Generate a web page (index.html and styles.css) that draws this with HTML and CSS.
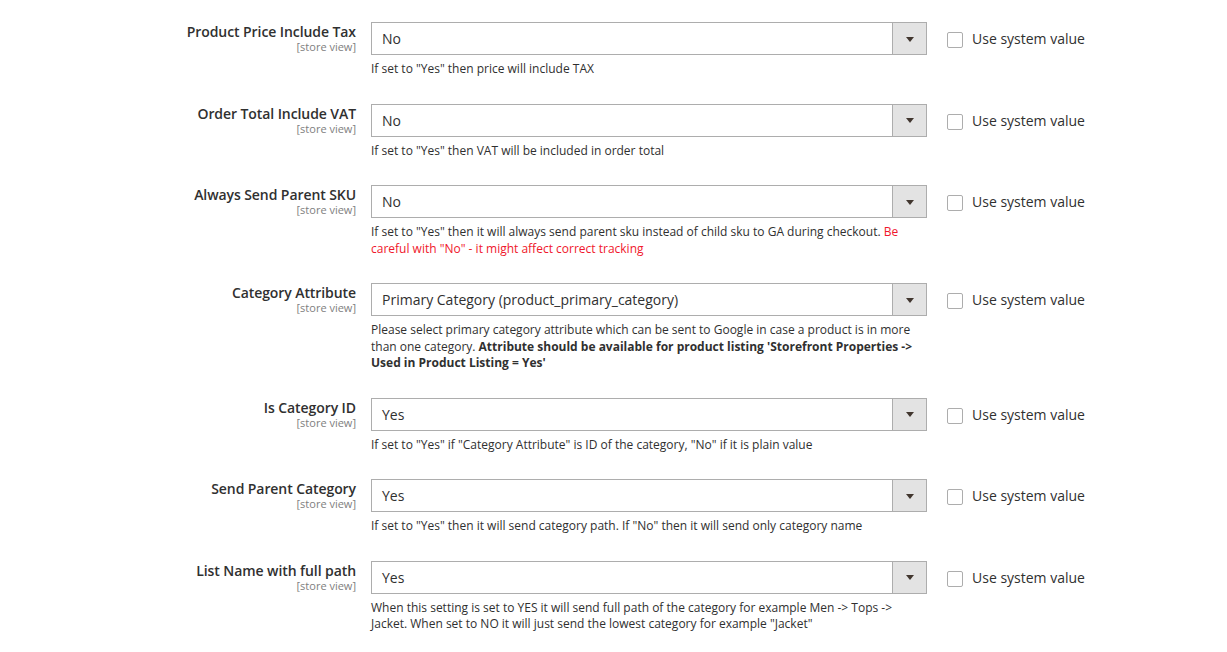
FILE: index.html
```html
<!DOCTYPE html>
<html>
<head>
<meta charset="utf-8">
<link rel="stylesheet" href="styles.css">
</head>
<body>
<div class="config">
  <div class="row">
    <div class="label"><span class="title">Product Price Include Tax</span><span class="scope">[store view]</span></div>
    <div class="value">
      <div class="select"><span class="sel-text">No</span><span class="arrow"></span></div>
      <p class="note">If set to "Yes" then price will include TAX</p>
    </div>
    <div class="use"><span class="cb"></span><span class="use-text">Use system value</span></div>
  </div>
  <div class="row">
    <div class="label"><span class="title">Order Total Include VAT</span><span class="scope">[store view]</span></div>
    <div class="value">
      <div class="select"><span class="sel-text">No</span><span class="arrow"></span></div>
      <p class="note">If set to "Yes" then VAT will be included in order total</p>
    </div>
    <div class="use"><span class="cb"></span><span class="use-text">Use system value</span></div>
  </div>
  <div class="row">
    <div class="label"><span class="title">Always Send Parent SKU</span><span class="scope">[store view]</span></div>
    <div class="value">
      <div class="select"><span class="sel-text">No</span><span class="arrow"></span></div>
      <p class="note">If set to "Yes" then it will always send parent sku instead of child sku to GA during checkout. <span class="warn">Be careful with "No" - it might affect correct tracking</span></p>
    </div>
    <div class="use"><span class="cb"></span><span class="use-text">Use system value</span></div>
  </div>
  <div class="row">
    <div class="label"><span class="title">Category Attribute</span><span class="scope">[store view]</span></div>
    <div class="value">
      <div class="select"><span class="sel-text">Primary Category (product_primary_category)</span><span class="arrow"></span></div>
      <p class="note">Please select primary category attribute which can be sent to Google in case a product is in more than one category. <strong>Attribute should be available for product listing 'Storefront Properties -&gt; Used in Product Listing = Yes'</strong></p>
    </div>
    <div class="use"><span class="cb"></span><span class="use-text">Use system value</span></div>
  </div>
  <div class="row">
    <div class="label"><span class="title">Is Category ID</span><span class="scope">[store view]</span></div>
    <div class="value">
      <div class="select"><span class="sel-text">Yes</span><span class="arrow"></span></div>
      <p class="note">If set to "Yes" if "Category Attribute" is ID of the category, "No" if it is plain value</p>
    </div>
    <div class="use"><span class="cb"></span><span class="use-text">Use system value</span></div>
  </div>
  <div class="row">
    <div class="label"><span class="title">Send Parent Category</span><span class="scope">[store view]</span></div>
    <div class="value">
      <div class="select"><span class="sel-text">Yes</span><span class="arrow"></span></div>
      <p class="note">If set to "Yes" then it will send category path. If "No" then it will send only category name</p>
    </div>
    <div class="use"><span class="cb"></span><span class="use-text">Use system value</span></div>
  </div>
  <div class="row">
    <div class="label"><span class="title">List Name with full path</span><span class="scope">[store view]</span></div>
    <div class="value">
      <div class="select"><span class="sel-text">Yes</span><span class="arrow"></span></div>
      <p class="note">When this setting is set to YES it will send full path of the category for example Men -&gt; Tops -&gt; Jacket. When set to NO it will just send the lowest category for example "Jacket"</p>
    </div>
    <div class="use"><span class="cb"></span><span class="use-text">Use system value</span></div>
  </div>
</div>
</body>
</html>
```
FILE: styles.css
```css
html, body {
  margin: 0;
  padding: 0;
  background: #ffffff;
}
body {
  font-family: "Open Sans", "Noto Sans", sans-serif;
  color: #303030;
}
.config {
  padding-top: 22px;
}
.row {
  display: flex;
  align-items: flex-start;
  margin-bottom: 26px;
}
.label {
  width: 356px;
  flex: none;
  text-align: right;
  padding-top: 2px;
  display: flex;
  flex-direction: column;
  align-items: flex-end;
}
.title {
  font-size: 14px;
  font-weight: 600;
  line-height: 16px;
  letter-spacing: -0.08px;
  color: #303030;
}
.scope {
  font-size: 11px;
  line-height: 13px;
  color: #808080;
}
.value {
  margin-left: 15px;
  width: 556px;
  flex: none;
}
.select {
  box-sizing: border-box;
  height: 33px;
  border: 1px solid #adadad;
  background: #ffffff;
  display: flex;
  align-items: stretch;
}
.sel-text {
  flex: 1;
  padding-left: 10px;
  font-size: 14px;
  line-height: 31px;
  color: #303030;
}
.arrow {
  width: 33px;
  flex: none;
  background: #e3e3e3;
  border-left: 1px solid #adadad;
  position: relative;
}
.arrow::after {
  content: "";
  position: absolute;
  left: 50%;
  top: 50%;
  margin-left: -4px;
  margin-top: -2px;
  border-left: 4.5px solid transparent;
  border-right: 4.5px solid transparent;
  border-top: 5px solid #41362f;
}
.note {
  margin: 6px 0 0 0;
  font-size: 12px;
  line-height: 16.5px;
  color: #303030;
}
.note strong {
  font-weight: 700;
}
.warn {
  color: #f0172c;
}
.use {
  margin-left: 20px;
  height: 33px;
  display: flex;
  align-items: center;
}
.cb {
  box-sizing: border-box;
  width: 16px;
  height: 16px;
  border: 1px solid #adadad;
  border-radius: 2px;
  background: #ffffff;
  margin-right: 9px;
  margin-top: 3px;
}
.use-text {
  font-size: 14px;
  line-height: 17px;
  color: #303030;
}
```
